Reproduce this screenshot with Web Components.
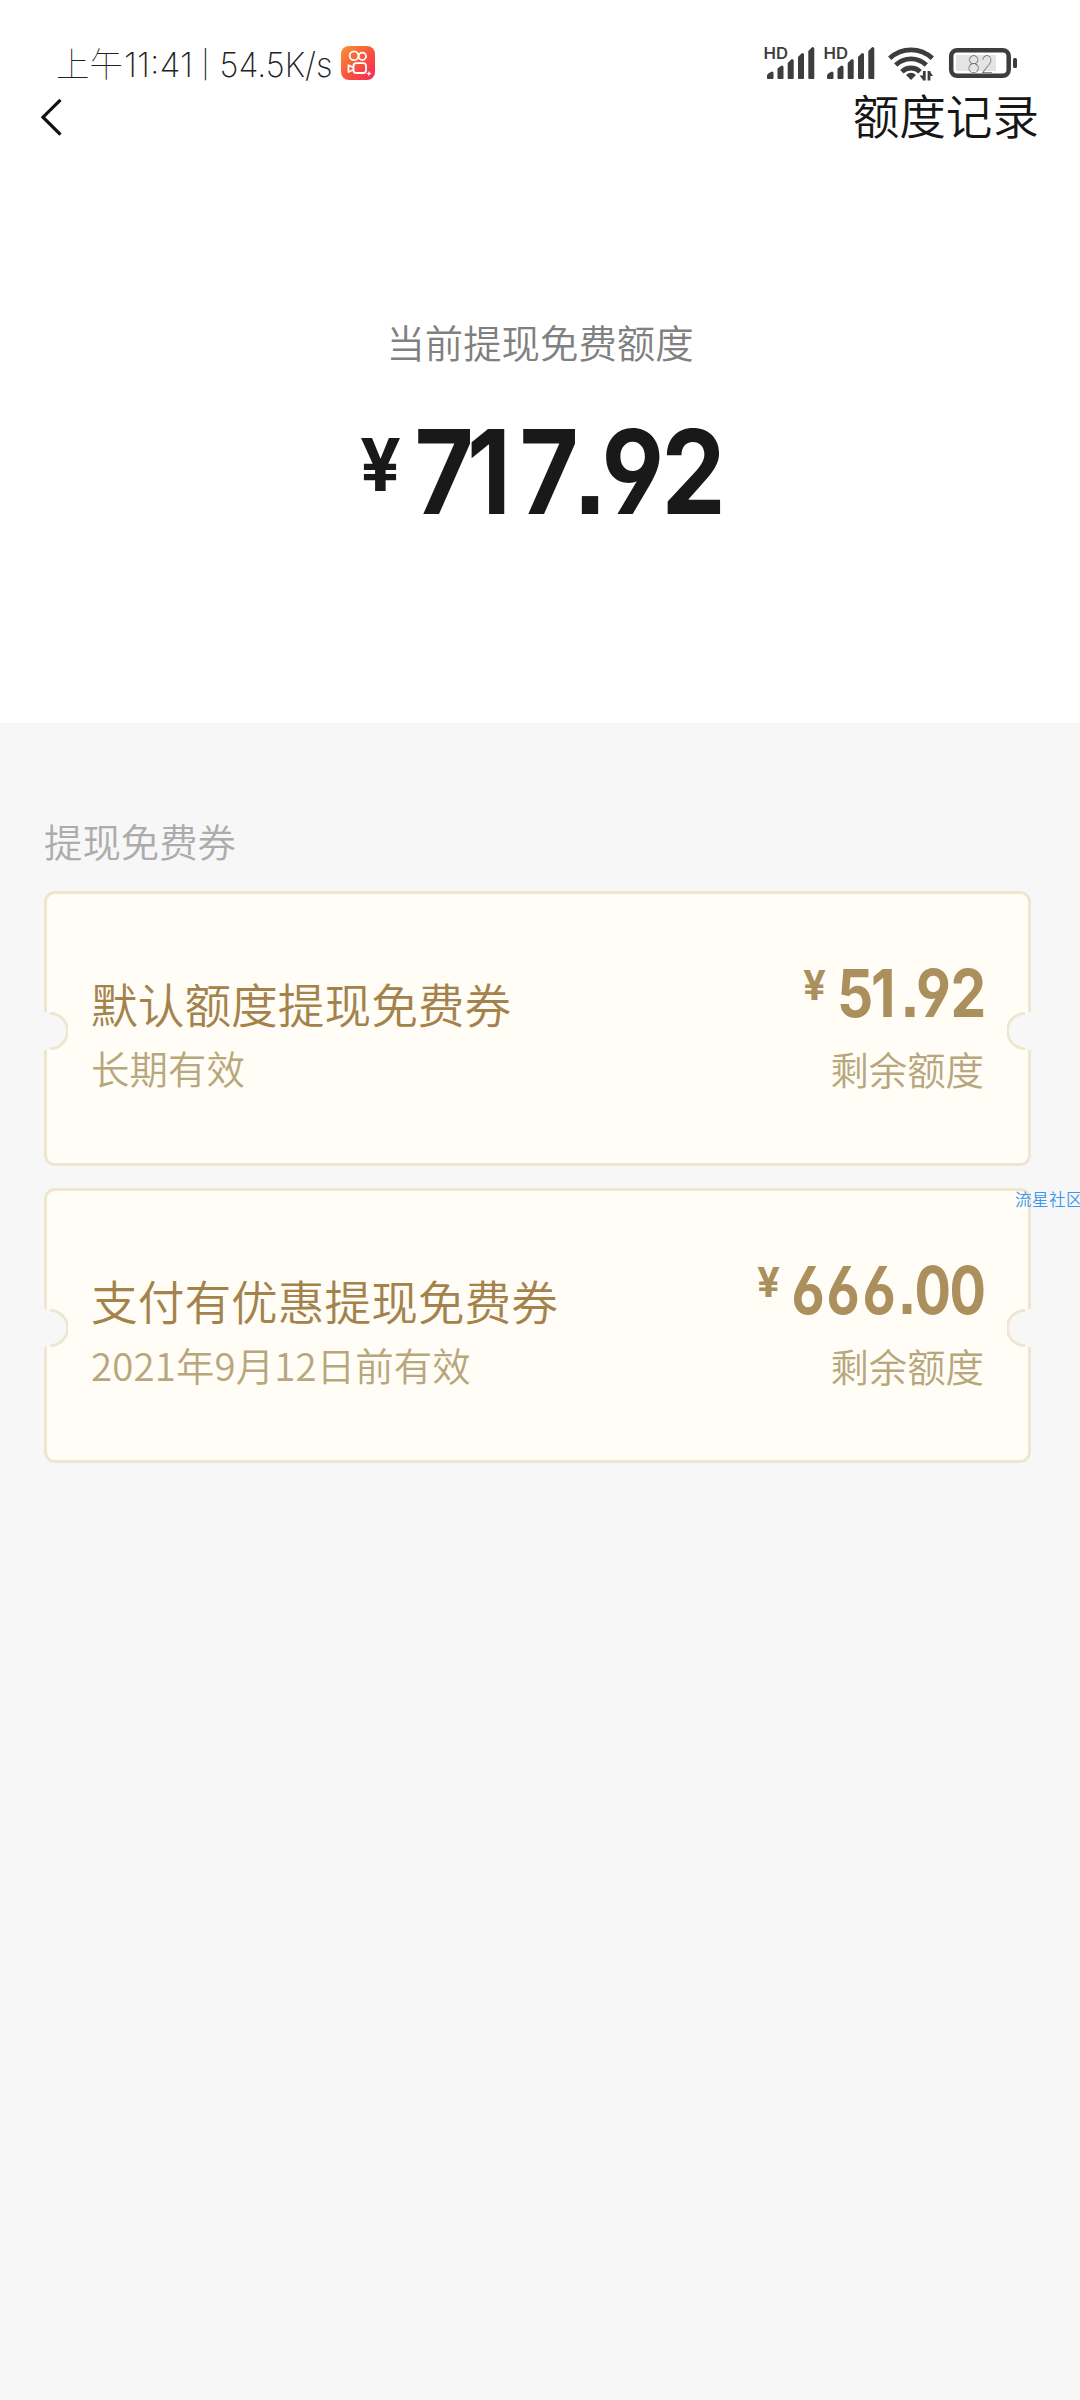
<!DOCTYPE html>
<html lang="zh-CN">
<head>
<meta charset="utf-8">
<meta name="viewport" content="width=device-width">
<title>额度记录</title>
<style>
html,body{margin:0;padding:0;background:#f7f7f7}
body{width:1080px;height:2400px;overflow:hidden;font-family:"Noto Sans CJK SC",sans-serif;font-weight:350}
</style>
</head>
<body>
<quota-page></quota-page>
<script>
const define = (name, html) => {
  const t = document.createElement('template');
  t.innerHTML = html;
  customElements.define(name, class extends HTMLElement {
    constructor() {
      super();
      this.attachShadow({ mode: 'open' }).append(t.content.cloneNode(true));
    }
  });
};

define('signal-bars', `
<style>:host{display:block;width:52px;height:34px}svg{display:block;overflow:visible}text{font:600 16px Inter,sans-serif;fill:#3d3d3d}</style>
<svg width="52" height="34" viewBox="0 0 52 34" fill="#3d3d3d">
  <text x="-.5" y="13" textLength="24.500" lengthAdjust="spacingAndGlyphs">HD</text>
  <path d="M3 30q0-2 2-3l3-1.500q1.500 0 1.500 1.500v5q0 1-1 1h-4.500q-1 0-1-1zM13.500 22.500l4-3q2 0 2 1.500v11q0 1-1 1h-4q-1 0-1-1zM23.700 17l4-4q2 0 2 1.500v17.500q0 1-1 1h-4q-1 0-1-1zM34 11l4-4q2 0 2 1.500v23.500q0 1-1 1h-4q-1 0-1-1zM44.300 5l4-4q2 0 2 1.500v29.500q0 1-1 1h-4q-1 0-1-1z"/>
</svg>`);

define('wifi-icon', `
<style>:host{display:block;width:47px;height:36px}svg{display:block}</style>
<svg width="47" height="36" viewBox="0 0 47 36" fill="none" stroke="#3d3d3d" stroke-width="4.800">
  <path d="M1.700 12.300a31 31 0 0 1 42.600 0M7.700 19a22 22 0 0 1 30.600 0M13.900 25.700a13 13 0 0 1 18.200 0"/>
  <path d="M18 29q5-4.500 10 0l-5 5z" fill="#3d3d3d" stroke="none"/>
  <path d="M36.300 25v9.500M41 25v9.500" stroke-width="2.800"/>
  <path d="M35.500 34.500v-5h-4zM41.500 25v5h3.500z" fill="#3d3d3d" stroke="none"/>
</svg>`);

define('battery-icon', `
<style>:host{display:block;width:70px;height:32px}svg{display:block;overflow:visible}text{font:100 24px Inter,sans-serif;fill:#333}</style>
<svg width="70" height="32" viewBox="0 0 70 32">
  <rect x="2.200" y="3.200" width="57.500" height="25.600" rx="6" fill="none" stroke="#3d3d3d" stroke-width="4.500"/>
  <rect x="7" y="8" width="40" height="16" fill="#e4e4e4"/>
  <rect x="64" y="11" width="4" height="10" rx="1.500" fill="#3d3d3d"/>
  <text x="18" y="25.500" textLength="27" lengthAdjust="spacingAndGlyphs">82</text>
</svg>`);

define('kuaishou-icon', `
<style>:host{display:block;width:34px;height:34px}svg{display:block}</style>
<svg width="34" height="34" viewBox="0 0 34 34">
  <defs><linearGradient id="g" x1="0" y1="0" x2="1" y2="1"><stop stop-color="#f79434"/><stop offset=".55" stop-color="#f9503f"/><stop offset="1" stop-color="#f5285a"/></linearGradient></defs>
  <rect width="34" height="34" rx="8" fill="url(#g)"/>
  <g fill="none" stroke="#fff" stroke-width="1.800">
    <circle cx="13" cy="9.700" r="4.400"/><circle cx="21.300" cy="10.300" r="3.700"/>
    <rect x="12.500" y="17.200" width="12.500" height="9.800" rx="2.800"/>
    <path d="M12.500 21.500l-5-2.300v6.800l5-2.300" stroke-linejoin="round"/>
  </g>
  <path d="M28 25l.8 1.800 1.800.8-1.800.8-.8 1.800-.8-1.800-1.800-.8 1.800-.8z" fill="#fff"/>
</svg>`);

define('status-bar', `
<style>
:host{display:flex;justify-content:space-between;align-items:flex-start;height:92px;box-sizing:border-box;padding:46px 61px 0 56px}
.l,.r{display:flex;align-items:flex-start}
.l svg{display:block;overflow:visible}
text{fill:#222;font:150 34px Inter,"Noto Sans CJK SC",sans-serif}
.cjk{font:100 34px "Noto Sans CJK SC",sans-serif}
kuaishou-icon{margin-left:7px}
signal-bars+signal-bars{margin-left:8px}
wifi-icon{margin-left:11.500px}
battery-icon{margin-left:14.500px;margin-top:1px}
</style>
<div class="l">
<svg width="278" height="36" viewBox="0 0 278 36"><text class="cjk" x="0" y="30.500" textLength="67" lengthAdjust="spacingAndGlyphs">上午</text><text x="68" y="30.500" textLength="69" lengthAdjust="spacingAndGlyphs">11:41</text><text x="145.500" y="27.500" style="font-size:27px">|</text><text x="163.500" y="30.500" textLength="113" lengthAdjust="spacingAndGlyphs">54.5K/s</text></svg>
<kuaishou-icon></kuaishou-icon>
</div>
<div class="r"><signal-bars></signal-bars><signal-bars></signal-bars><wifi-icon></wifi-icon><battery-icon></battery-icon></div>`);

define('nav-bar', `
<style>
:host{display:flex;justify-content:space-between;align-items:center;height:50px;padding:0 41px 0 39px}
svg{display:block}
::slotted(*){font-size:46.600px;line-height:50px;color:#161616;margin-top:-6px}
</style>
<svg width="24" height="38" viewBox="0 0 24 38"><path d="M21.500 1.800L4 19.200l17.500 17.500" fill="none" stroke="#111" stroke-width="3.200"/></svg>
<slot></slot>`);

customElements.define('money-amount', class extends HTMLElement {
  connectedCallback() {
    const a = n => this.getAttribute(n);
    const size = +a('size'), sx = +a('sx'), w = a('w'), h = a('h');
    const xs = a('xs').split(' ').map(v => v / sx).join(' ');
    this.attachShadow({ mode: 'open' }).innerHTML = `
<style>:host{display:block;width:${w}px;height:${h}px}svg{display:block;overflow:visible}
text{font:700 ${size}px Inter,sans-serif;fill:currentColor;font-feature-settings:"cv03","cv04","ss01","ss07","kern" 0,"calt" 0}
.y{font-size:${a('ysize')}px}</style>
<svg width="${w}" height="${h}"><text class="y" x="${a('yx') || 0}" y="${a('ybase')}" textLength="${a('yw')}" lengthAdjust="spacingAndGlyphs">¥</text><text transform="scale(${sx} 1)" x="${xs}" y="${h}">${a('value')}</text></svg>`;
  }
});

define('quota-hero', `
<style>
:host{display:flex;flex-direction:column;align-items:center;height:581px;box-sizing:border-box;padding-top:171px}
.label{font-size:38.400px;line-height:56px;color:#808080}
money-amount{margin-top:60px;color:#191919}
</style>
<div class="label"><slot></slot></div>
<money-amount value="717.92" w="362" h="85" size="117" sx=".87" xs="55.500 108 160.500 214 242.500 302.500" yx="1" ysize="73" ybase="62" yw="41"></money-amount>`);

define('coupon-card', `
<style>
:host{display:flex;justify-content:space-between;position:relative;box-sizing:border-box;width:987px;height:275px;border:3px solid #eee6d1;border-radius:11px;background:#fffdf6;padding:75px 44px 0}
.left{padding-top:4px}
.right{display:flex;flex-direction:column;align-items:flex-end;color:#ab8f5c}
.t{font-size:46.700px;line-height:60px;color:#a3834b}
.s{font-size:38.400px;line-height:56px;color:#b8a67c;margin-top:6px;white-space:nowrap}
.left .s{letter-spacing:.15px}
.right .s{margin-top:23px}
.n{position:absolute;top:118px;width:24px;height:38px}
.n1{left:-3px}.n2{right:-3px;transform:scaleX(-1)}
</style>
<svg class="n n1" viewBox="0 0 24 38"><path d="M-2 0H6a19 19 0 0 1 0 38H-2z" fill="#f7f7f7"/><path d="M6 1.400a17.600 17.600 0 0 1 0 35.200" fill="none" stroke="#eee6d1" stroke-width="2.800"/></svg>
<svg class="n n2" viewBox="0 0 24 38"><path d="M-2 0H6a19 19 0 0 1 0 38H-2z" fill="#f7f7f7"/><path d="M6 1.400a17.600 17.600 0 0 1 0 35.200" fill="none" stroke="#eee6d1" stroke-width="2.800"/></svg>
<div class="left"><div class="t"><slot name="title"></slot></div><div class="s"><slot name="valid"></slot></div></div>
<div class="right"><slot name="amount"></slot><div class="s">剩余额度</div></div>`);

define('water-mark', `
<style>:host{display:block;position:absolute;left:1015px;top:1187px;width:65px;overflow:hidden;white-space:nowrap;font-size:16.500px;letter-spacing:.5px;line-height:24px;color:#3b97f0}</style><slot></slot>`);

define('quota-page', `
<style>
:host{display:block;position:relative;width:1080px;height:2400px;background:#f7f7f7;overflow:hidden}
header{background:#fff}
main{padding:89px 49px 0 44px;display:flex;flex-direction:column}
h2{margin:0 0 23px;font-size:38.400px;line-height:56px;font-weight:inherit;color:#acacac}
coupon-card+coupon-card{margin-top:22px}
</style>
<header><status-bar></status-bar><nav-bar><span>额度记录</span></nav-bar><quota-hero>当前提现免费额度</quota-hero></header>
<main>
<h2>提现免费券</h2>
<coupon-card><span slot="title">默认额度提现免费券</span><span slot="valid">长期有效</span>
<money-amount slot="amount" value="51.92" w="181" h="48" size="66" sx=".86" xs="34 68 97.500 113 147.500" ysize="41" ybase="31" yw="23"></money-amount></coupon-card>
<coupon-card><span slot="title">支付有优惠提现免费券</span><span slot="valid">2021年9月12日前有效</span>
<money-amount slot="amount" value="666.00" w="227" h="48" size="66" sx=".82" xs="34.500 69.500 105.500 141 157.500 192.500" ysize="41" ybase="31" yw="23"></money-amount></coupon-card>
</main>
<water-mark>流星社区</water-mark>`);
</script>
</body>
</html>
